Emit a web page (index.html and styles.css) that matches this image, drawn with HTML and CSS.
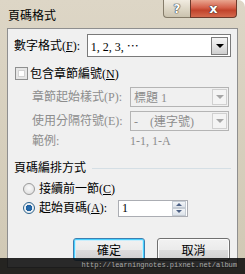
FILE: index.html
```html
<!DOCTYPE html>
<html lang="zh-Hant">
<head>
<meta charset="UTF-8">
<title>頁碼格式</title>
<link rel="stylesheet" href="styles.css">
</head>
<body>
<div class="window">
  <div class="titlebar">
    <span class="title">頁碼格式</span>
    <div class="caption">
      <span class="btn-help">?</span>
      <span class="btn-close">x</span>
    </div>
  </div>
  <div class="client">
    <div class="row row-format">
      <span class="label label-format">數字格式(<u>F</u>):</span>
      <div class="combo combo-format">1, 2, 3, ⋯<span class="drop"><i class="arrow"></i></span></div>
    </div>
    <div class="row row-check">
      <span class="checkbox"></span>
      <span class="label">包含章節編號(<u>N</u>)</span>
    </div>
    <div class="row row-sub first">
      <span class="label label-sub dim">章節起始樣式(P):</span>
      <div class="combo combo-sub dim">標題 1<span class="drop drop-dim"><i class="arrow arrow-dim"></i></span></div>
    </div>
    <div class="row row-sub">
      <span class="label label-sub dim">使用分隔符號(E):</span>
      <div class="combo combo-sub dim">-&nbsp;&nbsp;&nbsp;&nbsp;(連字號)<span class="drop drop-dim"><i class="arrow arrow-dim"></i></span></div>
    </div>
    <div class="row row-example">
      <span class="label label-sub dim">範例:</span>
      <span class="dim example">1-1, 1-A</span>
    </div>
    <div class="group">
      <span class="group-title">頁碼編排方式</span>
      <span class="group-line"></span>
    </div>
    <div class="row row-radio">
      <span class="radio"></span>
      <span class="label">接續前一節(<u>C</u>)</span>
    </div>
    <div class="row row-radio row-start">
      <span class="radio checked"></span>
      <span class="label label-start">起始頁碼(<u>A</u>):</span>
      <div class="spin">1<span class="spin-btns"><span class="spin-up"><i></i></span><span class="spin-down"><i></i></span></span></div>
    </div>
    <div class="buttons">
      <span class="button default">確定</span>
      <span class="button">取消</span>
    </div>
  </div>
  <div class="watermark">http://learningnotes.pixnet.net/album</div>
</div>
</body>
</html>
```

FILE: styles.css
```css
* {
box-sizing: border-box;
}
body {
margin: 0;
font-family: "Liberation Serif", "Noto Sans CJK TC", serif;
font-size: 12px;
color: #000;
}
u {
text-decoration: underline;
}
.window {
position: relative;
width: 245px;
height: 274px;
background: linear-gradient(#ddd6c6, #d0c8b4);
border-top-right-radius: 7px;
overflow: hidden;
}
.titlebar {
height: 28px;
display: flex;
align-items: flex-start;
}
.title {
padding: 9px 0 0 8px;
line-height: 14px;
}
.caption {
margin-left: auto;
margin-right: 8px;
display: flex;
}
.btn-help, .btn-close {
height: 18px;
display: flex;
align-items: center;
justify-content: center;
font-family: "DejaVu Sans", sans-serif;
font-weight: bold;
color: #fff;
text-shadow: 0 0 1px #333, 0 0 1px #333, 0 0 1px #333;
border: 1px solid #857c6a;
border-top: none;
}
.btn-help {
width: 27px;
font-size: 12px;
background: linear-gradient(#f1ece1, #dcd5c4 55%, #cbc3af);
border-bottom-left-radius: 4px;
border-right: none;
}
.btn-close {
width: 47px;
font-size: 13px;
background: linear-gradient(#e9a690, #d4604a 45%, #c1432b 60%, #d46a4e);
border-color: #6d3a2c;
border-bottom-right-radius: 4px;
}
.client {
margin: 0 7px;
height: 240px;
background: #f0f0f0;
border: 1px solid #8f8f8f;
padding: 0 6px;
}
.row {
display: flex;
align-items: center;
}
.label {
line-height: 14px;
white-space: nowrap;
}
.dim {
color: #8d8d8d;
}
.row-format {
margin-top: 5px;
height: 23px;
}
.label-format {
width: 73px;
}
.combo {
position: relative;
display: flex;
align-items: center;
background: #fff;
border: 1px solid #7a7a7a;
white-space: nowrap;
}
.combo-format {
width: 145px;
height: 23px;
padding-left: 3px;
}
.drop {
position: absolute;
right: 2px;
top: 2px;
width: 17px;
height: 18px;
border: 1px solid #7c7c7c;
background: linear-gradient(#f4f4f4, #e4e4e4 50%, #cfcfcf);
display: flex;
align-items: center;
justify-content: center;
}
.arrow {
width: 0;
height: 0;
border-left: 4px solid transparent;
border-right: 4px solid transparent;
border-top: 4px solid #000;
}
.row-check {
margin-top: 10px;
height: 13px;
}
.checkbox {
width: 13px;
height: 13px;
margin-left: 1px;
margin-right: 2px;
border: 1px solid #8e8f8f;
background: #fff;
box-shadow: inset 0 0 0 2px #e6e6e6, inset 0 0 0 3px #d3d3d3;
}
.row-sub {
margin-top: 4px;
height: 20px;
}
.row-sub.first {
margin-top: 7px;
}
.label-sub {
width: 116px;
padding-left: 18px;
}
.combo-sub {
width: 99px;
height: 20px;
padding-left: 3px;
background: #f0f0f0;
border-color: #b4b4b4;
}
.drop-dim {
top: 1px;
right: 1px;
width: 15px;
height: 16px;
border-color: #d0d0d0;
background: #f4f4f4;
}
.arrow-dim {
border-top-color: #a6a6a6;
}
.row-example {
margin-top: 3px;
height: 14px;
}
.group {
display: flex;
align-items: center;
margin-top: 13px;
height: 14px;
}
.group-title {
line-height: 14px;
}
.group-line {
flex: 1;
height: 1px;
margin-left: 6px;
margin-right: 0;
background: #d5dfe5;
}
.row-radio {
margin-top: 7px;
height: 14px;
}
.radio {
width: 12px;
height: 12px;
margin-left: 9px;
margin-right: 4px;
border-radius: 50%;
border: 1px solid #9a9a9a;
background: radial-gradient(circle at 50% 40%, #fbfbfb, #d8d8d8);
display: flex;
align-items: center;
justify-content: center;
}
.radio.checked {
border-color: #2c628b;
background: radial-gradient(circle, #2a6fb0 0, #1d5f9f 3px, #e9eef2 3.5px, #f5f5f5);
}
.row-start {
margin-top: 3px;
height: 18px;
}
.label-start {
width: 79px;
}
.spin {
position: relative;
display: flex;
align-items: center;
width: 70px;
height: 17px;
padding-left: 3px;
background: #fff;
border: 1px solid #abadb3;
}
.spin-btns {
position: absolute;
right: 1px;
top: 0;
width: 14px;
height: 15px;
display: flex;
flex-direction: column;
}
.spin-up, .spin-down {
flex: 1;
display: flex;
align-items: center;
justify-content: center;
background: linear-gradient(#f3f5f8, #dde3ea);
border: 1px solid #c5ccd4;
}
.spin-up i, .spin-down i {
width: 0;
height: 0;
border-left: 3px solid transparent;
border-right: 3px solid transparent;
}
.spin-up i {
border-bottom: 3px solid #4d6185;
}
.spin-down i {
border-top: 3px solid #4d6185;
}
.buttons {
display: flex;
justify-content: flex-end;
gap: 12px;
margin-top: 21px;
margin-right: 1px;
}
.button {
width: 73px;
height: 23px;
display: flex;
align-items: center;
justify-content: center;
border: 1px solid #707070;
border-radius: 3px;
background: linear-gradient(#f2f2f2, #ebebeb 50%, #dddddd 51%, #cfcfcf);
box-shadow: inset 0 0 0 1px #fcfcfc;
}
.button.default {
width: 72px;
border-color: #3c7fb1;
box-shadow: inset 0 0 0 1px #48d1ff, inset 0 0 0 2px #c9eefc;
}
.watermark {
position: absolute;
left: 0;
right: 0;
bottom: 0;
height: 16px;
padding: 3px 8px 0 0;
background: rgba(12, 12, 12, 0.88);
color: #a8a8a8;
font-family: "Liberation Mono", monospace;
font-size: 7px;
line-height: 9px;
text-align: right;
}
```
